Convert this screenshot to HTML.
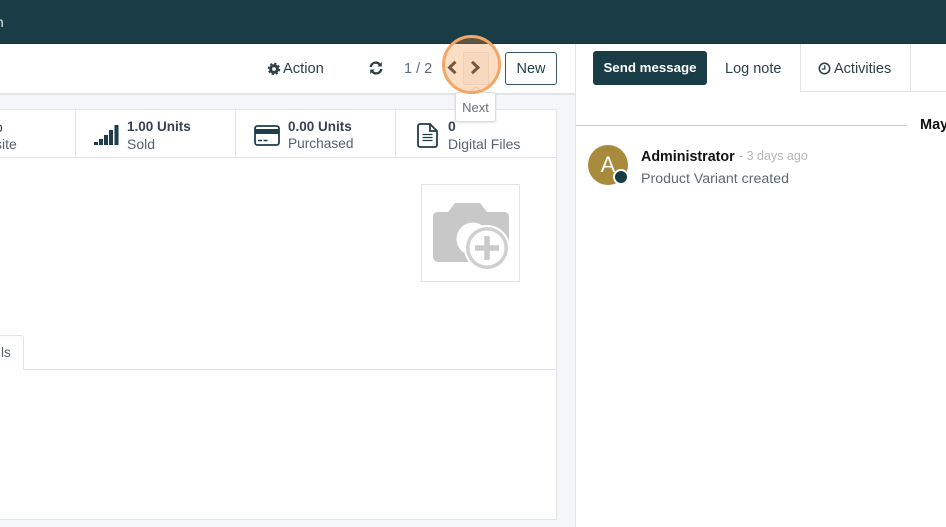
<!DOCTYPE html>
<html>
<head>
<meta charset="utf-8">
<style>
html,body{margin:0;padding:0;}
body{width:946px;height:527px;position:relative;overflow:hidden;background:#fff;font-family:"Liberation Sans",sans-serif;font-size:14px;color:#374151;}
.a{position:absolute;white-space:nowrap;line-height:18px;}
.b{font-weight:bold;}
svg{position:absolute;overflow:visible;}
</style>
</head>
<body>
<div class="a" style="left:0;top:0;width:946px;height:43px;background:#1a3c47;"></div>
<div class="a" style="left:-8px;top:13px;color:#e6eeee;font-size:14px;">m</div>
<div class="a" style="left:0;top:43px;width:946px;height:1px;background:#13303a;"></div>

<!-- left content bg -->
<div class="a" style="left:0;top:93px;width:575px;height:434px;background:#f5f6f9;border-top:2px solid #e2e3e6;box-sizing:border-box;"></div>
<!-- sheet -->
<div class="a" style="left:-2px;top:109px;width:559px;height:411px;background:#fff;border:1px solid #e2e4e8;box-sizing:border-box;"></div>
<div class="a" style="left:0;top:157px;width:557px;height:1px;background:#e2e4e8;"></div>
<div class="a" style="left:75px;top:110px;width:1px;height:47px;background:#e2e4e8;"></div>
<div class="a" style="left:235px;top:110px;width:1px;height:47px;background:#e2e4e8;"></div>
<div class="a" style="left:395px;top:110px;width:1px;height:47px;background:#e2e4e8;"></div>

<!-- chatter -->
<div class="a" style="left:575px;top:44px;width:371px;height:483px;background:#fff;border-left:1px solid #e2e3e6;box-sizing:border-box;"></div>

<!-- control panel -->
<svg style="left:268px;top:63px" width="12" height="12" viewBox="0 0 12 12"><circle cx="6" cy="6" r="3.400" fill="none" stroke="#2f3f46" stroke-width="3"/><circle cx="6" cy="6" r="5.500" fill="none" stroke="#2f3f46" stroke-width="1.400" stroke-dasharray="2.300 2.020"/></svg>
<div class="a" style="left:283px;top:60px;font-size:14.700px;color:#2f3f46;">Action</div>
<svg style="left:369px;top:61px" width="14" height="14" viewBox="0 0 14 14"><path d="M1.800 6A5 5 0 0 1 10.600 3.400" fill="none" stroke="#2f3f46" stroke-width="2.300"/><path d="M12.200 8A5 5 0 0 1 3.400 10.600" fill="none" stroke="#2f3f46" stroke-width="2.300"/><path d="M12.800 1V5.500H8.300Z M1.200 13V8.500H5.700Z" fill="#2f3f46"/></svg>
<div class="a" style="left:404px;top:60px;font-size:14.500px;color:#5f6a70;">1 / 2</div>
<svg style="left:446px;top:60px" width="12" height="15" viewBox="0 0 12 15"><path d="M9.500 1.800L3.500 7.500L9.500 13.200" fill="none" stroke="#3a3f3f" stroke-width="3"/></svg>
<svg style="left:469px;top:60px" width="12" height="15" viewBox="0 0 12 15"><path d="M3 1.800L9 7.500L3 13.200" fill="none" stroke="#3a3f3f" stroke-width="3"/></svg>
<div class="a" style="left:505px;top:52px;width:52px;height:33px;border:1px solid #3d5660;border-radius:3px;box-sizing:border-box;text-align:center;line-height:33px;font-size:14.500px;color:#1f3d48;">New</div>

<!-- stats -->
<div class="a" style="left:-5px;top:118px;color:#374151;">o</div>
<div class="a" style="left:-5px;top:135px;color:#56626b;">site</div>
<svg style="left:94px;top:124px" width="25" height="22" viewBox="0 0 25 22"><path d="M0 18h4v3h-4z M5 15h4v6h-4z M10 11h4v10h-4z M15 6h4v15h-4z M20.500 1h4v20h-4z" fill="#1f3d48"/></svg>
<div class="a b" style="left:127px;top:118px;color:#374151;font-size:13.500px;">1.00 Units</div>
<div class="a" style="left:127px;top:135px;color:#56626b;">Sold</div>
<svg style="left:254px;top:125px" width="26" height="21" viewBox="0 0 26 21"><rect x="1" y="1" width="24" height="19" rx="2.500" fill="none" stroke="#1f3d48" stroke-width="1.800"/><rect x="1" y="4" width="24" height="5" fill="#1f3d48"/><path d="M4 15.500h4M9.500 15.500h4" stroke="#1f3d48" stroke-width="1.400"/></svg>
<div class="a b" style="left:288px;top:118px;color:#374151;font-size:13.500px;">0.00 Units</div>
<div class="a" style="left:288px;top:135px;color:#56626b;font-size:13.700px;">Purchased</div>
<svg style="left:417px;top:123px" width="21" height="25" viewBox="0 0 21 25"><path d="M1 3a2 2 0 0 1 2-2h10l7 7v14a2 2 0 0 1-2 2H3a2 2 0 0 1-2-2z" fill="none" stroke="#1f3d48" stroke-width="1.800"/><path d="M13 1v7h7" fill="none" stroke="#1f3d48" stroke-width="1.800"/><path d="M5.500 11.500h10M5.500 14.500h10M5.500 17.500h10" stroke="#1f3d48" stroke-width="1.300"/></svg>
<div class="a b" style="left:448px;top:117px;color:#374151;">0</div>
<div class="a" style="left:448px;top:135px;color:#56626b;">Digital Files</div>

<!-- image placeholder -->
<div class="a" style="left:421px;top:184px;width:99px;height:98px;background:#fff;border:1px solid #e2e4e8;box-sizing:border-box;"></div>
<svg style="left:433px;top:202px" width="77" height="67" viewBox="0 0 77 67">
<path d="M5 10H15L22 1H47L54 10H71Q76 10 76 15V47Q76 60 66 60H6Q0 60 0 54V15Q0 10 5 10Z" fill="#c8c8c8"/>
<circle cx="40" cy="37" r="16.500" fill="#fff"/>
<circle cx="54" cy="46" r="23" fill="#fff"/>
<circle cx="54" cy="46" r="21" fill="#d0d0d0"/>
<circle cx="54" cy="46" r="17.500" fill="#fff"/>
<path d="M54 34V58M42 46H66" stroke="#cbcbcb" stroke-width="5.500"/>
</svg>

<!-- notebook tab -->
<div class="a" style="left:-2px;top:369px;width:559px;height:1px;background:#e2e4e8;"></div>
<div class="a" style="left:-4px;top:335px;width:28px;height:35px;background:#fff;border:1px solid #e2e4e8;border-bottom:none;border-radius:3px 3px 0 0;box-sizing:border-box;"></div>
<div class="a" style="left:1px;top:344px;color:#56626b;font-size:13.500px;">ls</div>

<!-- chatter buttons -->
<div class="a b" style="left:593px;top:51px;width:114px;height:34px;background:#1a3c47;border-radius:3px;color:#fff;text-align:center;line-height:34px;font-size:13.300px;">Send message</div>
<div class="a" style="left:725px;top:60px;color:#2f3f46;font-size:14.500px;">Log note</div>
<div class="a" style="left:800px;top:44px;width:111px;height:48px;border-left:1px solid #e2e4e8;border-right:1px solid #e2e4e8;box-sizing:border-box;"></div>
<div class="a" style="left:800px;top:91px;width:146px;height:1px;background:#e2e4e8;"></div>
<svg style="left:818px;top:62px" width="13" height="13" viewBox="0 0 13 13"><circle cx="6.500" cy="6.500" r="5.200" fill="none" stroke="#2f3f46" stroke-width="1.500"/><path d="M6.800 3.200V7H3.800" fill="none" stroke="#2f3f46" stroke-width="1.300"/></svg>
<div class="a" style="left:834px;top:60px;color:#2f3f46;font-size:14.500px;">Activities</div>

<!-- date separator -->
<div class="a" style="left:576px;top:125px;width:331px;height:1px;background:#c9cccf;"></div>
<div class="a b" style="left:920px;top:116px;color:#111;font-size:14.500px;">May</div>

<!-- message -->
<div class="a" style="left:588px;top:145px;width:40px;height:40px;border-radius:50%;background:#a88a3d;color:#fff;text-align:center;line-height:40px;font-size:22px;">A</div>
<div class="a" style="left:613px;top:169px;width:16px;height:16px;border-radius:50%;background:#fff;"></div>
<div class="a" style="left:615px;top:171px;width:12px;height:12px;border-radius:50%;background:#1a3c47;"></div>
<div class="a b" style="left:641px;top:148px;color:#111;font-size:14.300px;">Administrator</div>
<div class="a" style="left:739px;top:147px;color:#b4b8bb;font-size:12.500px;">- 3 days ago</div>
<div class="a" style="left:641px;top:170px;color:#5f6a70;font-size:14.200px;">Product Variant created</div>

<!-- tooltip -->
<div class="a" style="left:455px;top:92px;width:41px;height:30px;background:#fff;border:1px solid #dcdcdc;border-radius:3px;box-sizing:border-box;box-shadow:0 1px 2px rgba(0,0,0,.12);text-align:center;line-height:29px;font-size:13px;color:#6a7075;">Next</div>
<svg style="left:467px;top:86px" width="18" height="8" viewBox="0 0 18 8"><path d="M0 7L9 0L18 7Z" fill="#fff"/><path d="M1 7L9 1L17 7" fill="none" stroke="#dcdcdc"/></svg>

<!-- highlight -->
<div class="a" style="left:463px;top:52px;width:26px;height:33px;background:rgba(120,120,120,.05);border:1px solid rgba(150,120,90,.12);box-sizing:border-box;border-radius:2px;"></div>
<div class="a" style="left:442px;top:35px;width:59px;height:59px;border-radius:50%;background:rgba(246,145,60,.3);border:3px solid #f3a766;box-sizing:border-box;"></div>
</body>
</html>
